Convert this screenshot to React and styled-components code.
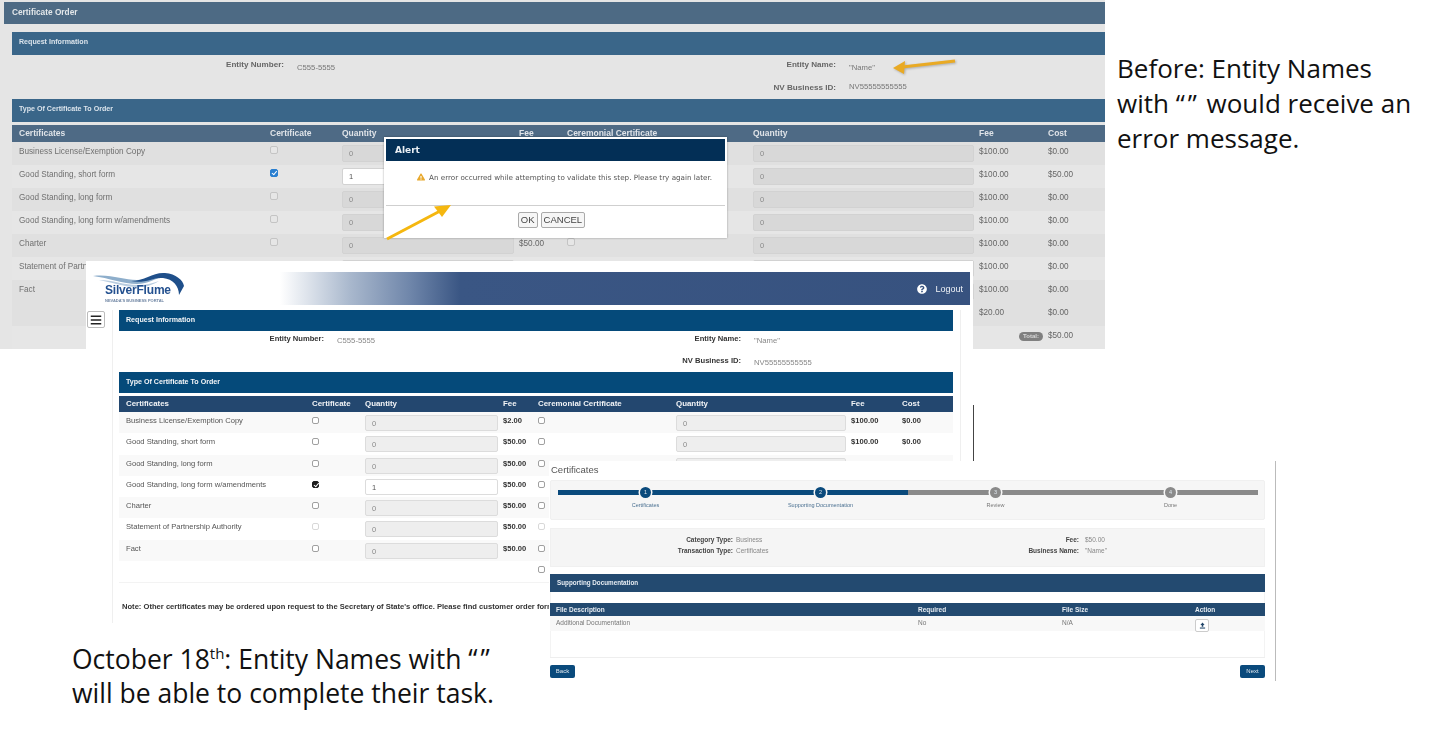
import React from "react";
import styled, { ThemeProvider, createGlobalStyle } from "styled-components";
import { FaExclamationTriangle, FaQuestionCircle, FaBars } from "react-icons/fa";

const names = [
  "Business License/Exemption Copy",
  "Good Standing, short form",
  "Good Standing, long form",
  "Good Standing, long form w/amendments",
  "Charter",
  "Statement of Partnership Authority",
  "Fact",
];

const oldTheme = {
  isOld: true,
  cols: "251px 72px 177px 48px 186px 226px 69px 1fr",
  fieldCols: "272px 286px 266px 1fr",
  fieldPad: 4,
  fieldRow: 23,
  fieldH: 40,
  labelFont: 8.1,
  topDrop: 3,
  lowDrop: -1,
  rowH: 23,
  rowPad: 4,
  rowFont: 8.2,
  headH: 17,
  headFont: 8.5,
  headBg: "#4e6a85",
  headColor: "#dfe3e8",
  pad: 7,
  text: "#707070",
  money: "#666",
  moneyWeight: 400,
  odd: "#e0e0e0",
  even: "#e6e6e6",
  inputH: 17,
  inputTop: -1,
  inputBg: "#d8d8d8",
  inputBorder: "#d2d2d2",
  checkSize: 8,
  checkTop: 0,
  box: "#c4c4c4",
  boxBg: "#e6e6e6",
  on: "#2a7fd0",
  label: "#666",
  value: "#777",
  bar: "#3a6689",
  barColor: "#dbe4ec",
};

const newTheme = {
  isOld: false,
  cols: "186px 53px 138px 35px 138px 175px 51px 1fr",
  fieldCols: "205px 217px 200px 1fr",
  fieldPad: 2,
  fieldRow: 21.5,
  fieldH: 39,
  labelFont: 7.6,
  topDrop: 2,
  lowDrop: 2,
  rowH: 21.25,
  rowPad: 3,
  rowFont: 7.6,
  headH: 16,
  headFont: 7.9,
  headBg: "#23476f",
  headColor: "#f2f4f7",
  pad: 7,
  text: "#555",
  money: "#333",
  moneyWeight: 700,
  odd: "#f9f9f9",
  even: "#ffffff",
  inputH: 16,
  inputTop: 0,
  inputBg: "#eeeeee",
  inputBorder: "#dcdcdc",
  checkSize: 7,
  checkTop: 2,
  box: "#a0a0a0",
  boxBg: "#fff",
  on: "#1c1c1c",
  label: "#333",
  value: "#888",
  bar: "#054a7a",
  barColor: "#f4f6f8",
};

const Global = createGlobalStyle`
  html, body {
    margin: 0;
    padding: 0;
    background: #fff;
    font-family: "Liberation Sans", Arial, sans-serif;
  }
`;

const App = () => {
  return (
    <Page>
      <Global />
      <ThemeProvider theme={oldTheme}>
        <BackShot>
          <TitleBar>Certificate Order</TitleBar>
          <BackBody>
            <SectionBar>Request Information</SectionBar>
            <Fields />
            <SectionBar>Type Of Certificate To Order</SectionBar>
            <CertTable checkedRow={1} showTotal />
          </BackBody>
          <AlertBox>
            <AlertHead>Alert</AlertHead>
            <AlertMessage>
              <FaExclamationTriangle size={8} color="#e8a92e" />
              An error occurred while attempting to validate this step. Please try again later.
            </AlertMessage>
            <AlertFoot>
              <AlertButton>OK</AlertButton>
              <AlertButton>CANCEL</AlertButton>
            </AlertFoot>
          </AlertBox>
        </BackShot>
      </ThemeProvider>

      <ThemeProvider theme={newTheme}>
        <MiddleShot>
          <SiteHeader>
            <Logo>
              <svg width="92" height="26" viewBox="0 0 92 26">
                <path d="M0 4C18 2 30 8 44 8C54 8 60 4 70 4C60 8 54 12 44 12C30 12 16 6 0 4Z" fill="#8eaecb" />
                <path d="M6 8C20 8 30 13 46 13C54 13 60 11 66 9C58 14 52 15 44 15C30 15 18 10 6 8Z" fill="#b9cde0" />
                <path d="M38 9C52 9 60 0 72 1C83 2 90 8 91 14L86 23C86 14 80 7 70 6C60 5 52 12 38 9Z" fill="#1f4f8a" />
              </svg>
              <LogoName>SilverFlume</LogoName>
              <LogoTag>NEVADA'S BUSINESS PORTAL</LogoTag>
            </Logo>
            <HeaderBand>
              <FaQuestionCircle size={10} color="#fff" />
              <Logout>Logout</Logout>
            </HeaderBand>
          </SiteHeader>
          <MenuButton>
            <FaBars size={12} color="#222" />
          </MenuButton>
          <SideColumn>
            <SectionBar>Request Information</SectionBar>
            <Fields />
            <SectionBar>Type Of Certificate To Order</SectionBar>
            <CertTable checkedRow={3} />
            <Note>
              Note: Other certificates may be ordered upon request to the Secretary of State's office. Please find customer order form
            </Note>
          </SideColumn>
        </MiddleShot>
      </ThemeProvider>

      <FrontShot>
        <PageTitle>Certificates</PageTitle>
        <Stepper>
          {["Certificates", "Supporting Documentation", "Review", "Done"].map((label, i) => (
            <Step key={label}>
              <StepDot $done={i < 2}>{i + 1}</StepDot>
              <StepLabel $done={i < 2}>{label}</StepLabel>
            </Step>
          ))}
        </Stepper>
        <InfoBox>
          <InfoLabel>Category Type:</InfoLabel>
          <InfoValue $gap={3}>Business</InfoValue>
          <InfoLabel>Fee:</InfoLabel>
          <InfoValue $gap={6}>$50.00</InfoValue>
          <InfoLabel>Transaction Type:</InfoLabel>
          <InfoValue $gap={3}>Certificates</InfoValue>
          <InfoLabel>Business Name:</InfoLabel>
          <InfoValue $gap={6}>"Name"</InfoValue>
        </InfoBox>
        <DocsPanel>
          <DocsBar>Supporting Documentation</DocsBar>
          <DocsHead>
            <span>File Description</span>
            <span>Required</span>
            <span>File Size</span>
            <span>Action</span>
          </DocsHead>
          <DocsRow>
            <span>Additional Documentation</span>
            <span>No</span>
            <span>N/A</span>
            <UploadButton>
              <svg width="7" height="7" viewBox="0 0 8 8">
                <path d="M4 0.5L6.4 3.3H4.9V5.5H3.1V3.3H1.6Z" fill="#1f4468" />
                <rect x="1" y="6.3" width="6" height="1.2" fill="#1f4468" />
              </svg>
            </UploadButton>
          </DocsRow>
        </DocsPanel>
        <NavRow>
          <NavButton>Back</NavButton>
          <NavButton>Next</NavButton>
        </NavRow>
      </FrontShot>

      <BeforeNote>
        Before: Entity Names
        <br />
        with <Quotes>“”</Quotes> would receive an
        <br />
        error message.
      </BeforeNote>
      <AfterNote>
        October 18<sup>th</sup>: Entity Names with <Quotes>“”</Quotes>
        <br />
        will be able to complete their task.
      </AfterNote>

      <ArrowLayer width="1452" height="738" viewBox="0 0 1452 738">
        <g fill="#e9aa24" stroke="#e9aa24" style={{ filter: "drop-shadow(1px 1px 1px rgba(0,0,0,0.25))" }}>
          <line x1="955" y1="61" x2="902" y2="67" strokeWidth="3" />
          <path d="M893 68L905 61L904 74Z" strokeWidth="0" />
        </g>
        <g fill="#f5b70f" stroke="#f5b70f">
          <line x1="387" y1="239" x2="442" y2="210" strokeWidth="3" />
          <path d="M451 205L434 206.5L442 217Z" strokeWidth="0" />
        </g>
      </ArrowLayer>
    </Page>
  );
};

const Fields = () => (
  <FieldGrid>
    <FieldLabel>Entity Number:</FieldLabel>
    <FieldValue $low={false}>C555-5555</FieldValue>
    <FieldLabel>Entity Name:</FieldLabel>
    <FieldValue $low={false}>"Name"</FieldValue>
    <span />
    <span />
    <FieldLabel>NV Business ID:</FieldLabel>
    <FieldValue $low>NV55555555555</FieldValue>
  </FieldGrid>
);

const CertTable = ({ checkedRow, showTotal }) => (
  <div>
    <HeadRow>
      <span>Certificates</span>
      <span>Certificate</span>
      <span>Quantity</span>
      <span>Fee</span>
      <span>Ceremonial Certificate</span>
      <span>Quantity</span>
      <span>Fee</span>
      <span>Cost</span>
    </HeadRow>
    {names.map((name, i) => (
      <CertRow key={name} $odd={i % 2 === 0}>
        <span>{name}</span>
        <Check $on={i === checkedRow} $faint={i === 5} />
        <Qty $on={i === checkedRow}>{i === checkedRow ? 1 : 0}</Qty>
        <Money>{i === 0 ? "$2.00" : "$50.00"}</Money>
        <Check $faint={i === 5} />
        <Qty>0</Qty>
        <Money>$100.00</Money>
        <Money>{i === checkedRow ? "$50.00" : "$0.00"}</Money>
      </CertRow>
    ))}
    <ExtraRow $odd={false}>
      <span />
      <span />
      <span />
      <span />
      <Check />
      <span />
      <Money>$20.00</Money>
      <Money>$0.00</Money>
    </ExtraRow>
    {showTotal && (
      <ExtraRow $odd>
        <span />
        <span />
        <span />
        <span />
        <span />
        <span />
        <TotalCell>
          <TotalBadge>Total:</TotalBadge>
        </TotalCell>
        <Money>$50.00</Money>
      </ExtraRow>
    )}
  </div>
);

export default App;

const Page = styled.div`
  position: relative;
  width: 1452px;
  height: 738px;
  overflow: hidden;
  background: #fff;
`;

const BackShot = styled.div`
  position: absolute;
  left: 0;
  top: 0;
  width: 1105px;
  height: 349px;
  overflow: hidden;
  background: #e5e5e5;
  box-sizing: border-box;
  padding: 2px 0 0 4px;
  filter: blur(0.35px);
`;

const TitleBar = styled.div`
  height: 22px;
  line-height: 21px;
  padding-left: 8px;
  background: #4d6a84;
  color: #e3e7ea;
  font-size: 8.3px;
  font-weight: 700;
`;

const BackBody = styled.div`
  margin: 8px 0 0 8px;
`;

const SectionBar = styled.div`
  height: ${(p) => (p.theme.isOld ? 23 : 21)}px;
  line-height: 20px;
  padding-left: 7px;
  background: ${(p) => p.theme.bar};
  color: ${(p) => p.theme.barColor};
  font-size: 7.1px;
  font-weight: 700;
`;

const FieldGrid = styled.div`
  display: grid;
  grid-template-columns: ${(p) => p.theme.fieldCols};
  grid-auto-rows: ${(p) => p.theme.fieldRow}px;
  padding-top: ${(p) => p.theme.fieldPad}px;
  height: ${(p) => p.theme.fieldH}px;
  font-size: ${(p) => p.theme.labelFont}px;
  line-height: 12px;
`;

const FieldLabel = styled.span`
  text-align: right;
  font-weight: 700;
  color: ${(p) => p.theme.label};
`;

const FieldValue = styled.span`
  margin: ${(p) => (p.$low ? p.theme.lowDrop : p.theme.topDrop)}px 0 0 13px;
  font-size: 7.7px;
  color: ${(p) => p.theme.value};
`;

const HeadRow = styled.div`
  display: grid;
  grid-template-columns: ${(p) => p.theme.cols};
  height: ${(p) => p.theme.headH}px;
  margin-top: 3px;
  box-sizing: border-box;
  padding: 0 0 1px ${(p) => p.theme.pad}px;
  align-items: center;
  background: ${(p) => p.theme.headBg};
  color: ${(p) => p.theme.headColor};
  font-size: ${(p) => p.theme.headFont}px;
  font-weight: 700;
`;

const CertRow = styled.div`
  display: grid;
  grid-template-columns: ${(p) => p.theme.cols};
  height: ${(p) => p.theme.rowH}px;
  box-sizing: border-box;
  padding: ${(p) => p.theme.rowPad}px 0 0 ${(p) => p.theme.pad}px;
  background: ${(p) => (p.$odd ? p.theme.odd : p.theme.even)};
  color: ${(p) => p.theme.text};
  font-size: ${(p) => p.theme.rowFont}px;
  line-height: 12px;
`;

const ExtraRow = styled(CertRow)`
  background: ${(p) => (p.theme.isOld ? (p.$odd ? p.theme.even : p.theme.odd) : "#fff")};
`;

const Check = styled.span`
  position: relative;
  width: ${(p) => p.theme.checkSize}px;
  height: ${(p) => p.theme.checkSize}px;
  margin-top: ${(p) => p.theme.checkTop}px;
  box-sizing: border-box;
  border: 1px solid ${(p) => (p.$on ? p.theme.on : p.theme.box)};
  border-radius: 2px;
  background: ${(p) => (p.$on ? p.theme.on : p.theme.boxBg)};
  opacity: ${(p) => (p.$faint ? 0.4 : 1)};
  ${(p) =>
    p.$on &&
    `&::after {
      content: "";
      position: absolute;
      left: 1.5px;
      top: 0;
      width: 2px;
      height: 3.5px;
      border: solid #fff;
      border-width: 0 1px 1px 0;
      transform: rotate(40deg);
    }`}
`;

const Qty = styled.div`
  width: calc(100% - 5px);
  height: ${(p) => p.theme.inputH}px;
  margin-top: ${(p) => p.theme.inputTop}px;
  box-sizing: border-box;
  padding-left: 6px;
  border: 1px solid ${(p) => p.theme.inputBorder};
  border-radius: 2px;
  background: ${(p) => (p.$on ? "#fff" : p.theme.inputBg)};
  color: ${(p) => (p.$on ? "#555" : "#8a8a8a")};
  font-size: 7.5px;
  line-height: ${(p) => p.theme.inputH - 1}px;
`;

const Money = styled.span`
  color: ${(p) => p.theme.money};
  font-weight: ${(p) => p.theme.moneyWeight};
`;

const TotalCell = styled.span`
  display: flex;
  justify-content: flex-end;
  padding-right: 5px;
`;

const TotalBadge = styled.span`
  height: 9px;
  margin-top: 2px;
  padding: 0 4px;
  border-radius: 5px;
  background: #808080;
  color: #d8d8d8;
  font-size: 6px;
  line-height: 9px;
  font-weight: 700;
`;

const AlertBox = styled.div`
  position: absolute;
  left: 384px;
  top: 137px;
  width: 343px;
  height: 101px;
  box-sizing: border-box;
  padding: 2px;
  background: #fff;
  box-shadow: 0 0 2px rgba(0, 0, 0, 0.35);
  font-family: "DejaVu Sans", Verdana, sans-serif;
`;

const AlertHead = styled.div`
  height: 22px;
  padding-left: 9px;
  line-height: 22px;
  background: #032f56;
  color: #e9eef3;
  font-size: 9px;
  font-weight: 700;
`;

const AlertMessage = styled.div`
  display: flex;
  align-items: center;
  gap: 4px;
  height: 45px;
  padding: 0 0 12px 31px;
  box-sizing: border-box;
  border-bottom: 1px solid #cfcfcf;
  color: #555;
  font-size: 7.2px;
  white-space: nowrap;
`;

const AlertFoot = styled.div`
  display: flex;
  justify-content: center;
  gap: 3px;
  padding: 6px 8px 0 0;
`;

const AlertButton = styled.span`
  height: 14px;
  padding: 0 2px;
  border: 1px solid #aaa;
  border-radius: 2px;
  background: #f6f6f6;
  color: #444;
  font-family: "Liberation Sans", Arial, sans-serif;
  font-size: 9.5px;
  line-height: 14px;
`;

const MiddleShot = styled.div`
  position: absolute;
  left: 86px;
  top: 261px;
  width: 887px;
  height: 364px;
  box-sizing: border-box;
  padding-top: 11px;
  background: #fff;
  filter: blur(0.3px);

  &::after {
    content: "";
    position: absolute;
    right: -1px;
    top: 144px;
    width: 1px;
    height: 56px;
    background: #444;
  }
`;

const SiteHeader = styled.div`
  display: flex;
  justify-content: space-between;
  height: 33px;
  padding: 0 3px 0 7px;
`;

const Logo = styled.div`
  position: relative;
  width: 92px;
`;

const LogoName = styled.div`
  position: absolute;
  left: 12px;
  top: 11px;
  color: #23508f;
  font-size: 12px;
  font-weight: 700;
  letter-spacing: -0.2px;
`;

const LogoTag = styled.div`
  position: absolute;
  left: 12px;
  top: 26px;
  color: #6f85a3;
  font-size: 4px;
  font-weight: 700;
  white-space: nowrap;
`;

const HeaderBand = styled.div`
  display: flex;
  align-items: center;
  justify-content: flex-end;
  gap: 8px;
  width: 690px;
  padding-right: 7px;
  box-sizing: border-box;
  background: linear-gradient(90deg, #fff 0, #a9b8cd 70px, #6f86aa 130px, #3a5684 180px, #37527f 100%);
`;

const Logout = styled.span`
  color: #f0f3f7;
  font-size: 9px;
`;

const MenuButton = styled.div`
  position: absolute;
  left: 1px;
  top: 50px;
  display: flex;
  align-items: center;
  justify-content: center;
  width: 18px;
  height: 17px;
  box-sizing: border-box;
  border: 1px solid #bbb;
  border-radius: 2px;
  background: #fff;
`;

const SideColumn = styled.div`
  width: 849px;
  height: 313px;
  margin: 5px 0 0 26px;
  padding: 0 7px 0 6px;
  border-left: 1px solid #efefef;
  border-right: 1px solid #efefef;
  box-sizing: border-box;
`;

const Note = styled.div`
  padding: 19px 0 0 3px;
  border-top: 1px solid #f3f3f3;
  color: #333;
  font-size: 7.6px;
  font-weight: 700;
  white-space: nowrap;
`;

const FrontShot = styled.div`
  position: absolute;
  left: 549px;
  top: 461px;
  width: 727px;
  height: 220px;
  box-sizing: border-box;
  padding: 2px 10px 0 1px;
  background: #fff;
  border-right: 1px solid #bbb;
  filter: blur(0.3px);
  font-size: 7px;
`;

const PageTitle = styled.div`
  height: 17px;
  padding: 1px 0 0 1px;
  box-sizing: border-box;
  color: #555;
  font-size: 9.5px;
  line-height: 12px;
`;

const Stepper = styled.div`
  display: grid;
  grid-template-columns: repeat(4, 1fr);
  height: 40px;
  box-sizing: border-box;
  padding: 6px 6px 0 7px;
  border: 1px solid #f0f0f0;
  border-radius: 2px;
  background-color: #f6f6f6;
  background-image: linear-gradient(90deg, #0a4a7c 50%, #8a8a8a 50%);
  background-size: calc(100% - 13px) 5px;
  background-position: 7px 9px;
  background-repeat: no-repeat;
`;

const Step = styled.div`
  display: flex;
  flex-direction: column;
  align-items: center;
`;

const StepDot = styled.span`
  width: 11px;
  height: 11px;
  border-radius: 50%;
  box-shadow: 0 0 0 1.5px #f6f6f6;
  background: ${(p) => (p.$done ? "#0a4a7c" : "#8a8a8a")};
  color: #dfe7ee;
  font-size: 5.5px;
  line-height: 11px;
  text-align: center;
`;

const StepLabel = styled.span`
  margin-top: 3px;
  color: ${(p) => (p.$done ? "#4a7091" : "#777")};
  font-size: 5.5px;
  line-height: 8px;
`;

const InfoBox = styled.div`
  display: grid;
  grid-template-columns: 182px 173px 173px 1fr;
  grid-auto-rows: 11px;
  align-content: center;
  height: 39px;
  margin-top: 8px;
  padding-bottom: 6px;
  box-sizing: border-box;
  border: 1px solid #f0f0f0;
  background: #f5f5f5;
  line-height: 11px;
`;

const InfoLabel = styled.span`
  text-align: right;
  color: #444;
  font-size: 6.5px;
  font-weight: 700;
`;

const InfoValue = styled.span`
  margin-left: ${(p) => p.$gap}px;
  color: #888;
  font-size: 6.5px;
`;

const DocsPanel = styled.div`
  height: 83px;
  margin-top: 7px;
  border-bottom: 1px solid #eee;
  box-shadow: inset 1px 0 #f3f3f3, inset -1px 0 #f3f3f3;
`;

const DocsBar = styled.div`
  height: 18px;
  padding-left: 7px;
  background: #234a70;
  color: #e6ecf2;
  font-size: 6.3px;
  font-weight: 700;
  line-height: 17px;
`;

const docCols = "362px 144px 133px 1fr";

const DocsHead = styled.div`
  display: grid;
  grid-template-columns: ${docCols};
  height: 13px;
  margin-top: 11px;
  padding-left: 6px;
  background: #234a70;
  color: #e6ecf2;
  font-size: 6.5px;
  font-weight: 700;
  line-height: 13px;
`;

const DocsRow = styled.div`
  display: grid;
  grid-template-columns: ${docCols};
  height: 15px;
  padding-left: 6px;
  background: #f8f8f8;
  color: #777;
  font-size: 6.5px;
  line-height: 14px;
`;

const UploadButton = styled.span`
  display: flex;
  align-items: center;
  justify-content: center;
  width: 14px;
  height: 13px;
  margin-top: 3px;
  border: 1px solid #ccc;
  border-radius: 2px;
  background: #fff;
  box-sizing: border-box;
`;

const NavRow = styled.div`
  display: flex;
  justify-content: space-between;
  margin-top: 7px;
`;

const NavButton = styled.span`
  width: 25px;
  height: 13px;
  border-radius: 2px;
  background: #0a4a7c;
  color: #dfe7ee;
  font-size: 6px;
  line-height: 13px;
  text-align: center;
`;

const Quotes = styled.span`
  letter-spacing: 3px;
`;

const BeforeNote = styled.p`
  position: absolute;
  left: 1117px;
  top: 51px;
  margin: 0;
  color: #111;
  font-family: "Open Sans", sans-serif;
  font-size: 26px;
  line-height: 35px;
  white-space: nowrap;
`;

const AfterNote = styled.p`
  position: absolute;
  left: 72px;
  top: 642px;
  margin: 0;
  color: #111;
  font-family: "Open Sans", sans-serif;
  font-size: 26.5px;
  line-height: 34px;
  white-space: nowrap;

  sup {
    font-size: 15px;
    line-height: 0;
  }
`;

const ArrowLayer = styled.svg`
  position: absolute;
  left: 0;
  top: 0;
  pointer-events: none;
`;
